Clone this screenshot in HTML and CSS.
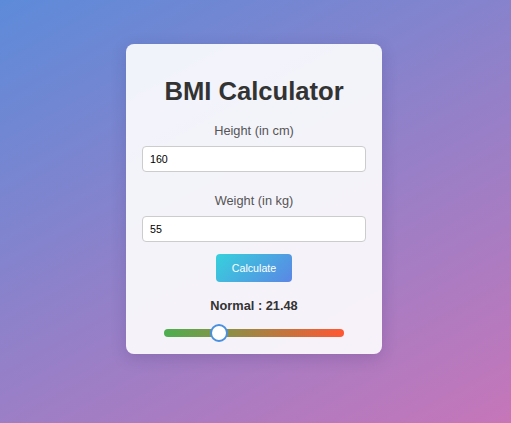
FILE: index.html
```html
<!DOCTYPE html>
<html lang="en">
<head>
<meta charset="utf-8">
<title>BMI Calculator</title>
<link rel="stylesheet" href="styles.css">
</head>
<body>
  <main class="card">
    <h1 class="title">BMI Calculator</h1>
    <label class="label" for="height">Height (in cm)</label>
    <input class="field" id="height" type="text" value="160">
    <label class="label label-second" for="weight">Weight (in kg)</label>
    <input class="field" id="weight" type="text" value="55">
    <button class="btn" type="button">Calculate</button>
    <p class="result">Normal : 21.48</p>
    <div class="meter">
      <span class="thumb" style="left: 30.5%"></span>
    </div>
  </main>
</body>
</html>
```

FILE: styles.css
```css
* { box-sizing: border-box; }

html, body {
  margin: 0;
  height: 100%;
}

body {
  background: linear-gradient(151deg, #5d8bd9 0%, #c676b9 100%);
  font-family: "Liberation Sans", Arial, sans-serif;
  display: flex;
  justify-content: center;
  align-items: flex-start;
  padding: 44px 3px 0 0;
}

.card {
  width: 256px;
  background: rgba(255, 255, 255, 0.9);
  border-radius: 8px;
  box-shadow: 0 4px 16px rgba(40, 30, 90, 0.18);
  padding: 16px 16px 17px;
  display: flex;
  flex-direction: column;
  align-items: center;
}

.title {
  margin: 16px 0 0;
  font-size: 25.6px;
  line-height: 30px;
  font-weight: bold;
  color: #333;
}

.label {
  display: block;
  margin-top: 17px;
  font-size: 12.8px;
  line-height: 15px;
  color: #555;
}

.label-second {
  margin-top: 21px;
}

.field {
  display: block;
  width: 224px;
  height: 26px;
  margin-top: 8px;
  padding: 0 7px;
  border: 1px solid #ccc;
  border-radius: 4px;
  background: #fff;
  font-family: "Liberation Sans", Arial, sans-serif;
  font-size: 10.67px;
  color: #000;
  outline: none;
}

.btn {
  margin-top: 12px;
  width: 76px;
  height: 28px;
  border: none;
  border-radius: 4px;
  background: linear-gradient(135deg, #36d1dc 0%, #5b86e5 100%);
  color: #fff;
  font-family: "Liberation Sans", Arial, sans-serif;
  font-size: 10.67px;
  padding: 0;
}

.result {
  margin: 16px 0 0;
  font-size: 12.8px;
  line-height: 15px;
  font-weight: bold;
  color: #333;
}

.meter {
  position: relative;
  margin-top: 16px;
  width: 180px;
  height: 8px;
  border-radius: 4px;
  background: linear-gradient(90deg, #4caf50 0%, #ff5733 100%);
}

.thumb {
  position: absolute;
  top: 50%;
  width: 18px;
  height: 18px;
  margin-left: -9px;
  margin-top: -9px;
  border-radius: 50%;
  background: #fff;
  border: 2px solid #4a90e2;
}
```
